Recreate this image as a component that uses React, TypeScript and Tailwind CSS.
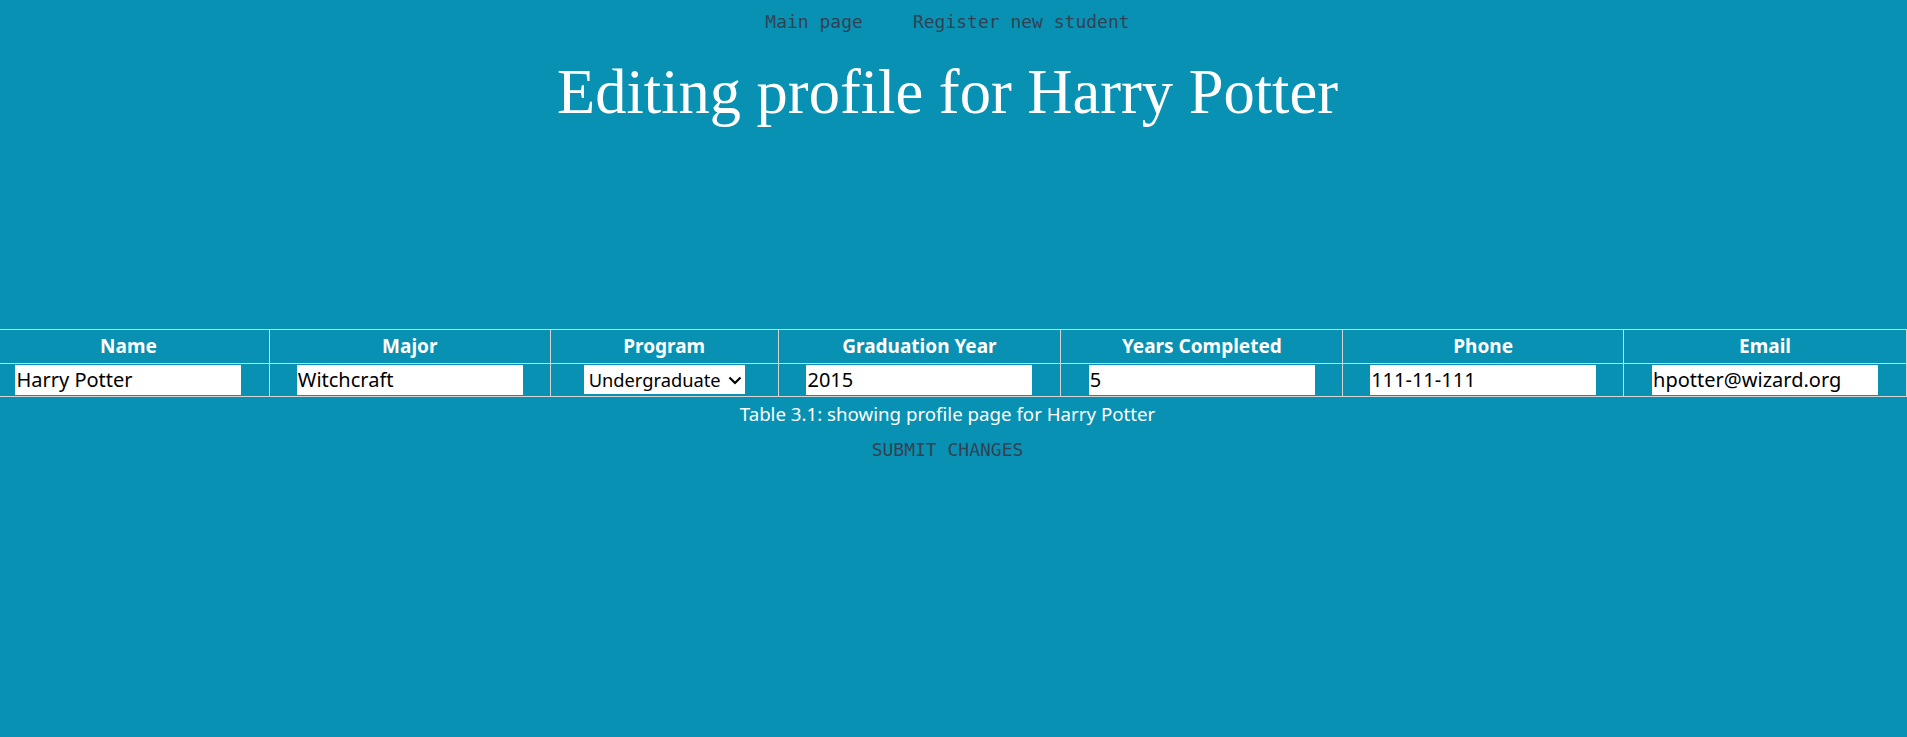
const columns = [
  { title: 'Name', width: 'w-[282px]' },
  { title: 'Major', width: 'w-[281px]' },
  { title: 'Program', width: 'w-[228px]' },
  { title: 'Graduation Year', width: 'w-[283px]' },
  { title: 'Years Completed', width: 'w-[282px]' },
  { title: 'Phone', width: 'w-[281px]' },
  { title: 'Email', width: 'w-[283px]' },
]

const values = ['Harry Potter', 'Witchcraft', null, '2015', '5', '111-11-111', 'hpotter@wizard.org']

export default function App() {
  return (
    <div className="min-h-[737px] w-full overflow-hidden bg-[#0891b2] font-['Noto_Sans',sans-serif]">
      <nav className="flex justify-center gap-[50px] pr-[12px] pt-[8px] font-['DejaVu_Sans_Mono',monospace] text-[18px] leading-[28px] text-[#334155]">
        <a href="#">Main page</a>
        <a href="#">Register new student</a>
      </nav>

      <h1 className="mt-[25px] pr-[12px] text-center font-['Liberation_Serif',serif] text-[62.5px] leading-none text-white">
        Editing profile for Harry Potter
      </h1>

      <form className="mt-[205px] flex flex-col items-center">
        <table className="ml-[-13px] w-[1920px] self-start border-collapse">
          <thead>
            <tr>
              {columns.map((c) => (
                <th
                  key={c.title}
                  className={`${c.width} h-[34px] border border-[#d4d4d4] p-0 pt-[1px] text-center text-[19px] font-bold text-white`}
                >
                  {c.title}
                </th>
              ))}
            </tr>
          </thead>
          <tbody>
            <tr>
              {values.map((v, i) => (
                <td key={i} className="h-[33px] border border-[#d4d4d4] p-0 text-center">
                  {v === null ? (
                    <div className="relative inline-block align-middle">
                      <select className="h-[29px] w-[161px] appearance-none bg-white pl-[5px] text-[18.3px] text-black outline-none">
                        <option>Undergraduate</option>
                        <option>Graduate</option>
                      </select>
                      <svg
                        width="14"
                        height="9"
                        viewBox="0 0 14 9"
                        className="pointer-events-none absolute right-[3px] top-[11px]"
                      >
                        <polyline points="1.5,1.5 7,7 12.5,1.5" fill="none" stroke="#000" strokeWidth="2.2" />
                      </svg>
                    </div>
                  ) : (
                    <input
                      defaultValue={v}
                      className="h-[30px] w-[226px] bg-white px-[1px] align-middle text-[20px] text-black outline-none"
                    />
                  )}
                </td>
              ))}
            </tr>
          </tbody>
        </table>
        <p className="mt-[3px] pr-[12px] text-[18.7px] leading-[27px] text-white">
          Table 3.1: showing profile page for Harry Potter
        </p>
        <button
          type="button"
          className="mt-[9px] mr-[12px] font-['DejaVu_Sans_Mono',monospace] text-[18px] leading-[28px] text-[#334155]"
        >
          SUBMIT CHANGES
        </button>
      </form>
    </div>
  )
}
